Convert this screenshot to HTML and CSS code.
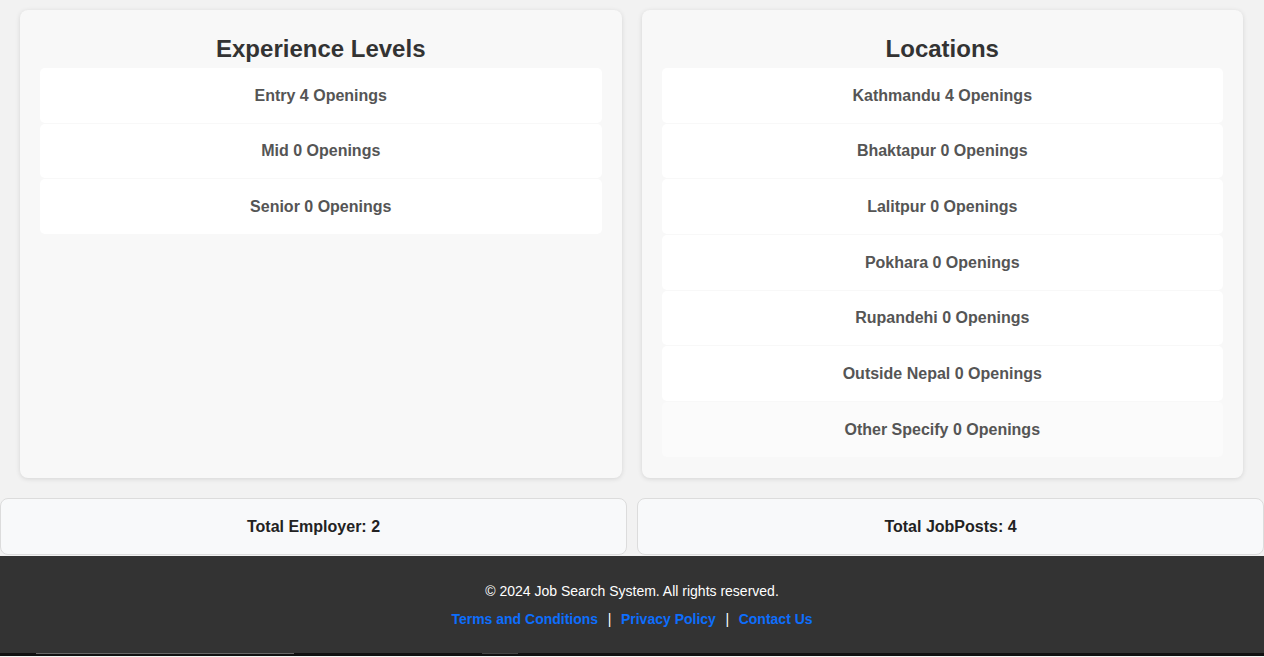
FILE: index.html
```html
<!DOCTYPE html>
<html lang="en">
<head>
<meta charset="utf-8">
<title>Job Search System</title>
<link rel="stylesheet" href="styles.css">
</head>
<body>
<main class="page">
  <section class="panels">
    <div class="card">
      <h2 class="card-title">Experience Levels</h2>
      <ul class="list">
        <li class="item">Entry 4 Openings</li>
        <li class="item">Mid 0 Openings</li>
        <li class="item">Senior 0 Openings</li>
      </ul>
    </div>
    <div class="card">
      <h2 class="card-title">Locations</h2>
      <ul class="list">
        <li class="item">Kathmandu 4 Openings</li>
        <li class="item">Bhaktapur 0 Openings</li>
        <li class="item">Lalitpur 0 Openings</li>
        <li class="item">Pokhara 0 Openings</li>
        <li class="item">Rupandehi 0 Openings</li>
        <li class="item">Outside Nepal 0 Openings</li>
        <li class="item item-hover">Other Specify 0 Openings</li>
      </ul>
    </div>
  </section>
  <section class="stats">
    <div class="stat">Total Employer: 2</div>
    <div class="stat">Total JobPosts: 4</div>
  </section>
</main>
<footer class="footer">
  <p class="copy">&copy; 2024 Job Search System. All rights reserved.</p>
  <p class="links">
    <a href="#" class="link">Terms and Conditions</a>
    <span class="sep">|</span>
    <a href="#" class="link">Privacy Policy</a>
    <span class="sep">|</span>
    <a href="#" class="link">Contact Us</a>
  </p>
</footer>
<div class="strip"><span class="seg seg-a"></span><span class="seg seg-b"></span></div>
</body>
</html>
```
FILE: styles.css
```css
html, body {
  margin: 0;
  padding: 0;
}
body {
  background: #f2f2f2;
  font-family: "Liberation Sans", Arial, sans-serif;
  color: #333;
  overflow: hidden;
}
.page {
  padding: 10px 0 0;
}
.panels {
  display: grid;
  grid-template-columns: 1fr 1fr;
  gap: 20px;
  padding: 0 21px 0 20px;
}
.card {
  background: #f8f8f8;
  border-radius: 8px;
  box-shadow: 0 1px 5px rgba(0, 0, 0, 0.12);
  padding: 20px 20px 20px;
}
.card-title {
  margin: 5px 0 6px;
  font-size: 24px;
  line-height: 27px;
  font-weight: bold;
  text-align: center;
  color: #333;
}
.list {
  list-style: none;
  margin: 0;
  padding: 0;
}
.item {
  background: #fff;
  border-radius: 5px;
  padding: 18.8px 10px 17.2px;
  line-height: 18.67px;
  font-size: 16px;
  font-weight: bold;
  color: #555;
  text-align: center;
  margin-bottom: 1px;
}
.item-hover {
  background: #fbfbfb;
}
.stats {
  display: flex;
  gap: 10px;
  margin-top: 20px;
}
.stat {
  flex: 1;
  background: #f8f9fa;
  border: 1px solid #dcdcdc;
  border-radius: 8px;
  padding: 18px 10px;
  line-height: 19px;
  font-size: 16px;
  font-weight: bold;
  color: #222;
  text-align: center;
}
.footer {
  margin-top: 1px;
  background: #333;
  color: #fff;
  text-align: center;
  padding: 27px 0 26px;
  font-size: 14px;
}
.copy {
  margin: 0 0 12px;
  line-height: 16px;
}
.links {
  margin: 0;
  line-height: 16px;
}
.link {
  color: #0d6efd;
  font-weight: bold;
  text-decoration: none;
}
.sep {
  color: #fff;
  margin: 0 5.7px;
}
.strip {
  position: relative;
  height: 3px;
  background: #111;
}
.seg {
  position: absolute;
  top: 0;
  height: 1px;
  background: #666;
}
.seg-a {
  left: 36px;
  width: 258px;
}
.seg-b {
  left: 482px;
  width: 36px;
  background: #444;
}
```
